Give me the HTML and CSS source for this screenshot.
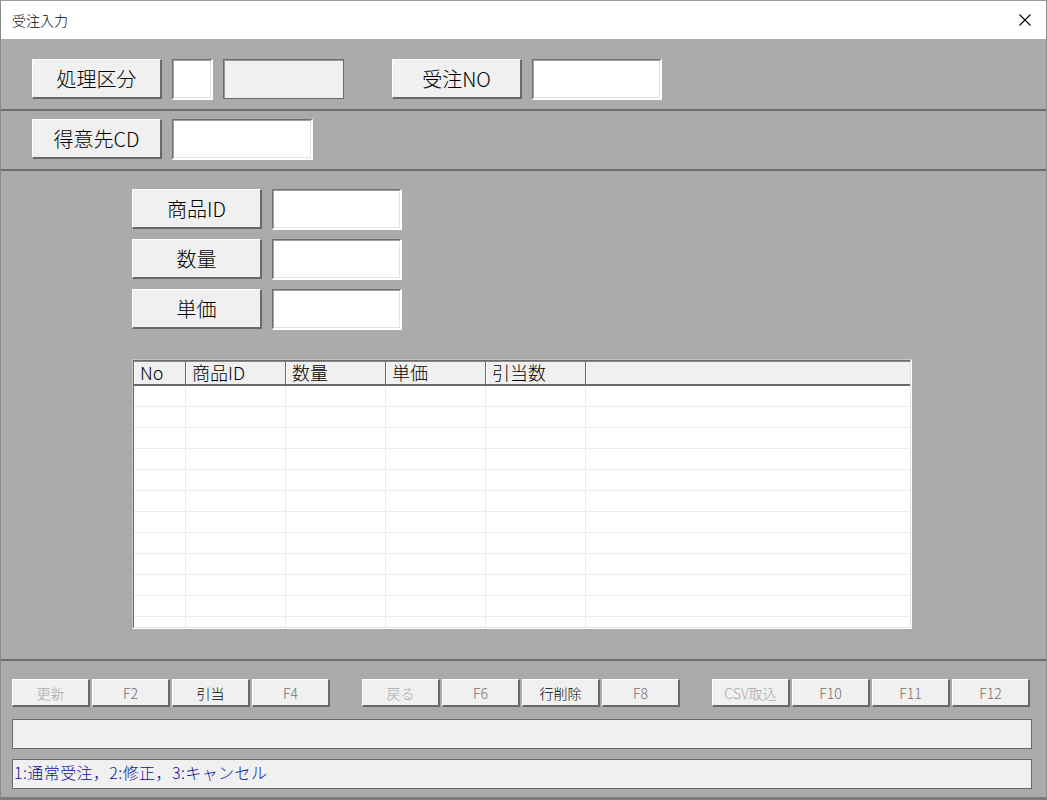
FILE: index.html
```html
<!DOCTYPE html>
<html lang="ja">
<head>
    <meta charset="UTF-8">
    <title>受注入力</title>
    <link rel="stylesheet" href="styles.css">
</head>
<body>

    <div class="window">
        <div class="titlebar">
            <span class="title">受注入力</span>
            <svg class="close-icon" width="12" height="12" viewBox="0 0 12 12">
                <path d="M0.5 0.5L11.5 11.5M11.5 0.5L0.5 11.5" stroke="#000" stroke-width="1.1" fill="none"/>
            </svg>
        </div>

        <!-- header area -->
        <div class="section sec-head">
            <div class="field-row">
                <button class="label-btn">処理区分</button>
                <input type="text" class="text-box box-small">
                <div class="ro-box"></div>
                <button class="label-btn far">受注NO</button>
                <input type="text" class="text-box">
            </div>
        </div>

        <div class="section sec-cust">
            <div class="field-row">
                <button class="label-btn">得意先CD</button>
                <input type="text" class="text-box box-wide">
            </div>
        </div>

        <!-- detail area -->
        <div class="section sec-detail">
            <div class="item-list">
                <div class="field-row">
                    <button class="label-btn">商品ID</button>
                    <input type="text" class="text-box">
                </div>
                <div class="field-row">
                    <button class="label-btn">数量</button>
                    <input type="text" class="text-box">
                </div>
                <div class="field-row">
                    <button class="label-btn">単価</button>
                    <input type="text" class="text-box">
                </div>
            </div>

            <div class="grid">
                <div class="grid-inner">
                    <div class="grid-head">
                        <div>No</div>
                        <div>商品ID</div>
                        <div>数量</div>
                        <div>単価</div>
                        <div>引当数</div>
                        <div></div>
                    </div>
                    <div class="grid-row"><span></span><span></span><span></span><span></span><span></span><span></span></div>
                    <div class="grid-row"><span></span><span></span><span></span><span></span><span></span><span></span></div>
                    <div class="grid-row"><span></span><span></span><span></span><span></span><span></span><span></span></div>
                    <div class="grid-row"><span></span><span></span><span></span><span></span><span></span><span></span></div>
                    <div class="grid-row"><span></span><span></span><span></span><span></span><span></span><span></span></div>
                    <div class="grid-row"><span></span><span></span><span></span><span></span><span></span><span></span></div>
                    <div class="grid-row"><span></span><span></span><span></span><span></span><span></span><span></span></div>
                    <div class="grid-row"><span></span><span></span><span></span><span></span><span></span><span></span></div>
                    <div class="grid-row"><span></span><span></span><span></span><span></span><span></span><span></span></div>
                    <div class="grid-row"><span></span><span></span><span></span><span></span><span></span><span></span></div>
                    <div class="grid-row"><span></span><span></span><span></span><span></span><span></span><span></span></div>
                    <div class="grid-row"><span></span><span></span><span></span><span></span><span></span><span></span></div>
                </div>
            </div>
        </div>

        <!-- function keys + messages -->
        <div class="section sec-foot">
            <div class="fkeys">
                <div class="fgroup">
                    <button class="fkey disabled">更新</button>
                    <button class="fkey dim">F2</button>
                    <button class="fkey">引当</button>
                    <button class="fkey dim">F4</button>
                </div>
                <div class="fgroup">
                    <button class="fkey disabled">戻る</button>
                    <button class="fkey dim">F6</button>
                    <button class="fkey">行削除</button>
                    <button class="fkey dim">F8</button>
                </div>
                <div class="fgroup">
                    <button class="fkey disabled">CSV取込</button>
                    <button class="fkey dim">F10</button>
                    <button class="fkey dim">F11</button>
                    <button class="fkey dim">F12</button>
                </div>
            </div>
            <div class="status"></div>
            <div class="status guide">1:通常受注，2:修正，3:キャンセル</div>
        </div>
    </div>

</body>
</html>
```

FILE: styles.css
```css
* {
    box-sizing: border-box;
}
body {
    margin: 0;
    background-color: #ffffff;
    font-family: "Noto Sans CJK JP", "Noto Sans", sans-serif;
    font-weight: 300;
}
.window {
    width: 1047px;
    height: 800px;
    display: flex;
    flex-direction: column;
    background-color: #ababab;
    border-left: 1px solid #8a8a8a;
    border-right: 1px solid #8a8a8a;
    border-bottom: 3px solid #7c7c7c;
    overflow: hidden;
}
.titlebar {
    height: 39px;
    flex: none;
    display: flex;
    align-items: center;
    justify-content: space-between;
    background-color: #ffffff;
    border-top: 1px solid #9a9a9a;
    padding: 0 15px 0 11px;
}
.title {
    font-size: 14px;
    color: #000;
}
.close-icon {
    display: block;
}
.section {
    flex: none;
    border-bottom: 2px solid #6c6c6c;
}
.sec-head {
    height: 72px;
    padding: 20px 0 0 31px;
}
.sec-cust {
    height: 60px;
    padding: 8px 0 0 31px;
}
.sec-detail {
    height: 490px;
    padding: 18px 0 0 131px;
}
.sec-foot {
    height: 136px;
    border-bottom: none;
    padding: 18px 0 0 11px;
}
.field-row {
    display: flex;
    gap: 10px;
}
.label-btn {
    width: 130px;
    height: 40px;
    padding: 0;
    background-color: #f0f0f0;
    border-style: solid;
    border-width: 1px 2px 2px 1px;
    border-color: #ffffff #696969 #696969 #ffffff;
    font-family: inherit;
    font-weight: inherit;
    font-size: 20px;
    color: #000;
}
.label-btn.far {
    margin-left: 38px;
}
.text-box {
    width: 130px;
    height: 41px;
    padding: 0 4px;
    background-color: #ffffff;
    border-style: solid;
    border-width: 1px 2px 2px 1px;
    border-color: #6f6f6f #ffffff #ffffff #6f6f6f;
    box-shadow: inset 1px 1px 0 #a0a0a0, inset -1px -1px 0 #e3e3e3;
    font-family: inherit;
    font-size: 16px;
    outline: none;
}
.box-small {
    width: 41px;
}
.box-wide {
    width: 141px;
}
.ro-box {
    width: 121px;
    height: 40px;
    background-color: #f0f0f0;
    border: 1px solid #6a6a6a;
    box-shadow: inset 1px 1px 0 #9a9a9a;
}
.item-list {
    display: flex;
    flex-direction: column;
    gap: 9px;
}

/* grid */
.grid {
    width: 780px;
    height: 270px;
    margin-top: 29px;
    border-style: solid;
    border-width: 1px;
    border-color: #c4c4c4 #ffffff #ffffff #c4c4c4;
}
.grid-inner {
    height: 100%;
    background-color: #ffffff;
    border-style: solid;
    border-width: 1px;
    border-color: #696969 #e3e3e3 #e3e3e3 #696969;
    overflow: hidden;
}
.grid-head,
.grid-row {
    display: grid;
    grid-template-columns: 52px 100px 100px 100px 100px 1fr;
}
.grid-head {
    height: 25px;
    background-color: #f0f0f0;
    border-top: 1px solid #8a8a8a;
    border-bottom: 2px solid #696969;
}
.grid-head div {
    border-left: 1px solid #ffffff;
    border-right: 1px solid #696969;
    padding-left: 5px;
    font-size: 18px;
    line-height: 21px;
    color: #000;
}
.grid-head div:last-child {
    border-right: none;
}
.grid-row {
    height: 21px;
    border-bottom: 1px solid #ebebeb;
}
.grid-row span {
    border-right: 1px solid #ebebeb;
}
.grid-row span:last-child {
    border-right: none;
}

/* function keys */
.fkeys {
    display: flex;
    gap: 32px;
}
.fgroup {
    display: flex;
    gap: 2px;
}
.fkey {
    width: 78px;
    height: 28px;
    padding: 0;
    background-color: #f0f0f0;
    border-style: solid;
    border-width: 1px 2px 2px 1px;
    border-color: #ffffff #696969 #696969 #ffffff;
    font-family: inherit;
    font-weight: inherit;
    font-size: 14px;
    color: #000;
}
.fkey.dim {
    color: #707070;
}
.fkey.disabled {
    color: #a8a8a8;
}
.status {
    width: 1020px;
    height: 30px;
    margin-top: 12px;
    background-color: #f0f0f0;
    border: 1px solid #6a6a6a;
}
.status.guide {
    margin-top: 10px;
    padding-left: 1px;
    font-size: 16px;
    line-height: 24px;
    letter-spacing: 0.4px;
    color: #10109a;
}
```
